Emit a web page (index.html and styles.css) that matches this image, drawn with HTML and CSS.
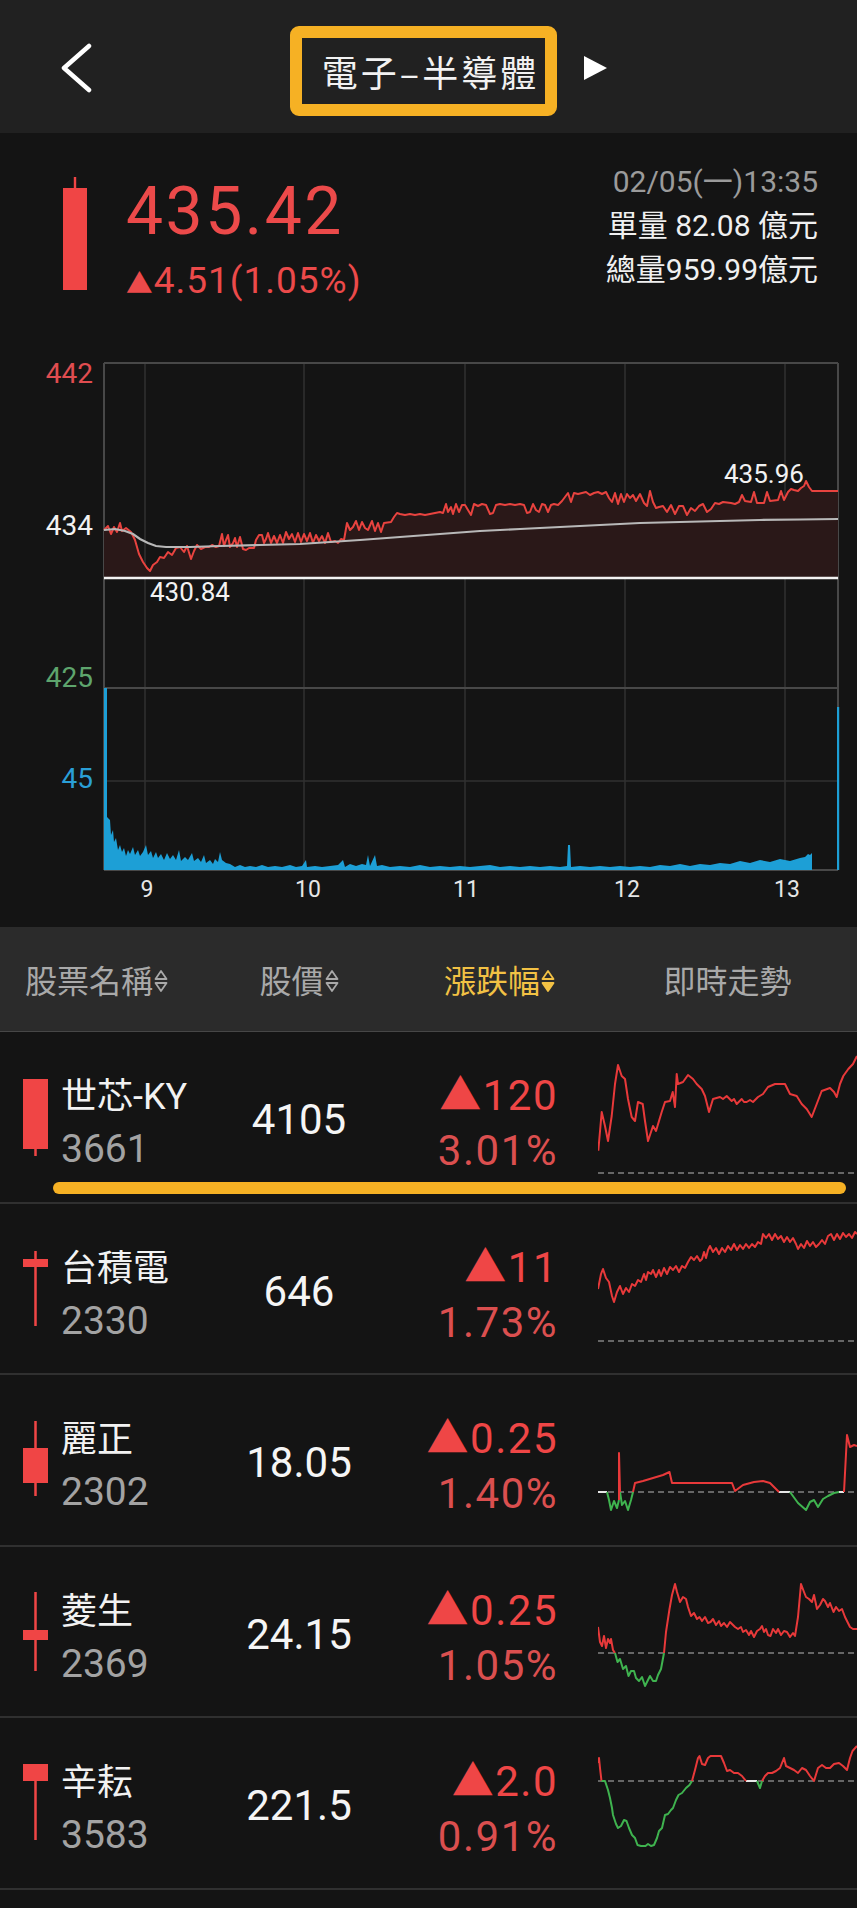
FILE: index.html
```html
<!DOCTYPE html>
<html lang="zh-Hant">
<head>
    <meta charset="UTF-8">
    <meta name="viewport" content="width=device-width, initial-scale=1.0">
    <title>電子–半導體</title>
    <link rel="stylesheet" href="styles.css">
</head>
<body>
<div class="app">
    <header class="topbar">
        <button class="back" aria-label="返回">
            <svg width="32" height="50" viewBox="0 0 32 50"><polyline points="29,3 4,25 29,47" fill="none" stroke="#fff" stroke-width="4.5" stroke-linecap="round" stroke-linejoin="round"/></svg>
        </button>
        <h1 class="title">電子–半導體</h1>
        <svg class="next" width="26" height="26" viewBox="0 0 26 26"><polygon points="2,1 25,13 2,25" fill="#fff"/></svg>
    </header>

    <section class="summary">
        <div class="quote">
            <svg class="candle-big" width="24" height="113" viewBox="0 0 24 113"><rect x="10.8" y="0" width="2.4" height="12" fill="#f04545"/><rect x="0" y="11" width="24" height="102" fill="#f04545"/></svg>
            <div class="quote-text">
                <div class="quote-price">435.42</div>
                <div class="quote-change"><span class="tri">▲</span>4.51(1.05%)</div>
            </div>
        </div>
        <div class="quote-meta">
            <div class="meta-time">02/05(一)13:35</div>
            <div>單量 82.08 億元</div>
            <div>總量959.99億元</div>
        </div>
    </section>

    <svg class="intraday" width="857" height="587" viewBox="0 0 857 587">
        <g stroke="#303030" stroke-width="1.5">
            <line x1="145" y1="23" x2="145" y2="530"/>
            <line x1="304" y1="23" x2="304" y2="530"/>
            <line x1="465" y1="23" x2="465" y2="530"/>
            <line x1="625" y1="23" x2="625" y2="530"/>
            <line x1="785" y1="23" x2="785" y2="530"/>
            <line x1="104" y1="441" x2="838" y2="441"/>
        </g>
        <g stroke="#484848" stroke-width="2">
            <line x1="104" y1="23" x2="838" y2="23"/>
            <line x1="104" y1="348" x2="838" y2="348"/>
            <line x1="104" y1="23" x2="104" y2="530"/>
            <line x1="838" y1="23" x2="838" y2="530"/>
            <line x1="104" y1="530" x2="838" y2="530"/>
        </g>
        <polygon fill="#2a1818" points="104,190 108,186 111,194 114,187 117,192 120,183 122,191 126,188 131,192 135,200 139,214 143,222 147,228 150,231 153,225 157,222 160,217 164,218 168,212 172,215 176,208 180,207 184,212 187,206 191,219 194,211 197,205 201,209 205,207 209,207 212,205 216,207 219,206 222,194 224,206 226,200 228,195 230,207 233,203 235,198 237,207 240,197 243,209 246,210 249,208 254,208 256,200 259,195 262,195 264,203 266,199 268,193 271,203 274,196 277,203 280,195 283,203 286,192 289,199 292,194 295,202 298,193 301,202 304,194 307,201 310,193 313,203 316,195 319,201 322,196 325,203 328,193 331,202 335,201 338,203 341,199 344,200 347,183 350,190 353,187 356,181 359,190 362,182 365,188 368,190 372,181 375,191 378,183 381,192 384,183 391,182 394,177 397,173 400,174 405,175 410,174 415,175 420,174 425,175 430,174 435,173 440,172 443,173 446,164 448,172 451,167 453,174 456,164 459,172 462,165 465,165 468,170 471,175 474,164 478,166 482,164 486,165 490,174 493,173 496,165 500,164 505,165 510,164 515,165 520,164 524,165 527,173 530,172 533,164 536,170 539,172 542,164 545,165 548,172 551,165 554,164 558,165 562,161 565,157 568,153 571,162 574,153 578,154 582,153 586,152 590,155 594,153 598,152 602,154 606,152 609,158 612,162 615,153 618,164 621,154 624,162 627,154 630,158 633,155 636,161 640,154 644,163 647,166 650,151 653,162 656,168 659,167 663,166 667,172 671,165 675,174 679,166 683,166 687,175 691,168 695,171 699,166 703,164 707,172 711,169 715,163 719,164 723,162 731,163 735,164 739,162 742,155 745,161 751,162 754,152 757,163 764,163 767,152 770,161 778,160 781,151 784,160 788,152 791,149 794,150 798,151 801,148 804,146 806,141 809,147 812,151 838,151 838,238 104,238"/>
        <polyline fill="none" stroke="#e8433f" stroke-width="2" stroke-linejoin="round" points="104,190 108,186 111,194 114,187 117,192 120,183 122,191 126,188 131,192 135,200 139,214 143,222 147,228 150,231 153,225 157,222 160,217 164,218 168,212 172,215 176,208 180,207 184,212 187,206 191,219 194,211 197,205 201,209 205,207 209,207 212,205 216,207 219,206 222,194 224,206 226,200 228,195 230,207 233,203 235,198 237,207 240,197 243,209 246,210 249,208 254,208 256,200 259,195 262,195 264,203 266,199 268,193 271,203 274,196 277,203 280,195 283,203 286,192 289,199 292,194 295,202 298,193 301,202 304,194 307,201 310,193 313,203 316,195 319,201 322,196 325,203 328,193 331,202 335,201 338,203 341,199 344,200 347,183 350,190 353,187 356,181 359,190 362,182 365,188 368,190 372,181 375,191 378,183 381,192 384,183 391,182 394,177 397,173 400,174 405,175 410,174 415,175 420,174 425,175 430,174 435,173 440,172 443,173 446,164 448,172 451,167 453,174 456,164 459,172 462,165 465,165 468,170 471,175 474,164 478,166 482,164 486,165 490,174 493,173 496,165 500,164 505,165 510,164 515,165 520,164 524,165 527,173 530,172 533,164 536,170 539,172 542,164 545,165 548,172 551,165 554,164 558,165 562,161 565,157 568,153 571,162 574,153 578,154 582,153 586,152 590,155 594,153 598,152 602,154 606,152 609,158 612,162 615,153 618,164 621,154 624,162 627,154 630,158 633,155 636,161 640,154 644,163 647,166 650,151 653,162 656,168 659,167 663,166 667,172 671,165 675,174 679,166 683,166 687,175 691,168 695,171 699,166 703,164 707,172 711,169 715,163 719,164 723,162 731,163 735,164 739,162 742,155 745,161 751,162 754,152 757,163 764,163 767,152 770,161 778,160 781,151 784,160 788,152 791,149 794,150 798,151 801,148 804,146 806,141 809,147 812,151 838,151"/>
        <polyline fill="none" stroke="#b8b8b8" stroke-width="2.2" points="104,190 115,189 125,191 133,194 140,199 148,203 156,206 166,207 190,207 220,206 260,205 300,204 330,202 360,200 400,197 440,194 480,191 520,189 560,187 600,185 640,183 680,182 720,181 760,180 800,179.5 838,179"/>
        <line x1="104" y1="238" x2="838" y2="238" stroke="#f2f2f2" stroke-width="2.5"/>
        <polygon fill="#1d9fd6" points="104,530 104,348 107,348 107,477 110,480 111,495 113,490 114,502 116,498 118,510 120,505 122,512 124,508 126,516 128,510 130,514 133,507 135,515 138,510 140,516 143,512 146,505 148,515 151,511 153,518 156,512 158,518 161,514 164,520 167,513 170,519 173,515 176,520 179,510 181,521 185,517 188,520 192,513 194,521 198,518 201,522 204,515 206,523 210,520 213,524 215,519 218,522 220,512 222,520 226,523 230,524 235,527 240,525 245,527 250,526 256,527 262,525 268,527 275,526 282,527 290,525 296,527 302,526 306,520 307,527 315,526 322,527 330,526 338,525 343,520 345,527 350,524 356,526 362,524 366,525 368,515 370,526 375,515 377,526 382,525 390,527 400,526 410,527 420,525 430,527 440,526 450,527 460,526 470,527 480,526 490,525 500,527 510,526 520,527 530,526 540,527 550,526 560,527 567,526 568,505 570,505 571,527 580,526 590,527 600,526 610,527 620,526 630,527 640,526 650,527 660,525 670,526 680,524 690,526 700,524 710,525 720,523 730,524 740,521 750,523 760,520 770,522 780,519 790,521 800,518 805,517 808,514 810,515 812,513 812,530"/>
        <rect x="837" y="367" width="2.2" height="163" fill="#1d9fd6"/>
        <g class="axis-label" text-anchor="end">
            <text x="93" y="43" fill="#e04d50">442</text>
            <text x="93" y="195" fill="#f2f2f2">434</text>
            <text x="93" y="347" fill="#5ea56d">425</text>
            <text x="93" y="448" fill="#2a9fd6">45</text>
        </g>
        <g class="time-label" text-anchor="middle" fill="#e6e6e6">
            <text x="147" y="557">9</text>
            <text x="308" y="557">10</text>
            <text x="466" y="557">11</text>
            <text x="627" y="557">12</text>
            <text x="787" y="557">13</text>
        </g>
        <g class="mark-label" fill="#f2f2f2">
            <text x="150" y="261">430.84</text>
            <text x="724" y="143">435.96</text>
        </g>
    </svg>

    <div class="list-head">
        <div class="sortable head-name">股票名稱<svg class="sort" width="14" height="24" viewBox="0 0 14 24"><path d="M7 2 L12.5 10 H1.5 Z" fill="none" stroke="currentColor" stroke-width="1.8" stroke-linejoin="round"/><path d="M1.5 14 H12.5 L7 22 Z" fill="none" stroke="currentColor" stroke-width="1.8" stroke-linejoin="round"/></svg></div>
        <div class="sortable head-price">股價<svg class="sort" width="14" height="24" viewBox="0 0 14 24"><path d="M7 2 L12.5 10 H1.5 Z" fill="none" stroke="currentColor" stroke-width="1.8" stroke-linejoin="round"/><path d="M1.5 14 H12.5 L7 22 Z" fill="none" stroke="currentColor" stroke-width="1.8" stroke-linejoin="round"/></svg></div>
        <div class="sortable head-change">漲跌幅<svg class="sort" width="14" height="24" viewBox="0 0 14 24"><path d="M7 2 L12.5 10 H1.5 Z" fill="none" stroke="currentColor" stroke-width="1.8" stroke-linejoin="round"/><path d="M1.5 14 H12.5 L7 22 Z" fill="currentColor" stroke="currentColor" stroke-width="1.8" stroke-linejoin="round"/></svg></div>
        <div class="head-trend">即時走勢</div>
    </div>

    <div class="stock-row">
        <div class="stock-name">
            <svg class="candle" width="25" height="80" viewBox="0 0 25 80"><rect x="0" y="2" width="25" height="70"/><rect x="11.25" y="72" width="2.5" height="7"/></svg>
            <div class="label">
                <div class="name">世芯-KY</div>
                <div class="code">3661</div>
            </div>
        </div>
        <div class="stock-price">4105</div>
        <div class="stock-change"><div class="chg"><span class="tri">▲</span>120</div><div class="pct">3.01%</div></div>
        <svg class="spark" width="259" height="170" viewBox="0 0 259 170">
            <line class="base" x1="0" y1="141" x2="259" y2="141"/>
            <polyline class="up" points="0.3,118.7 3.7,80 7,94 10,109 13.7,84 17,52 20,33 23.7,44 27,47 30,67 33.7,85 37,89 40,70 44.7,72 47,89 50,109 55,94 58,99 63.7,80 67,70 72,69 74.7,60 77,75 78.7,42 80,52 85,50 90,43 95,47 98.7,52 103.7,57 107,64 111,80 115,67 122,65 125,67 128.7,64 133.7,69 136,67 138.7,72 143.7,67 146,70 148.7,70 152,68 155,70 160,65 165,62 170,55 177,52 187,52 192,62 198.7,64 203.7,72 208.7,77 213.7,85 218.7,72 223.7,59 232,56 236,60 238.7,65 242,52 245.3,44 250.3,37 255,32 259,24"/>
        </svg>
        <div class="highlight"></div>
    </div>

    <div class="stock-row">
        <div class="stock-name">
            <svg class="candle" width="25" height="80" viewBox="0 0 25 80"><rect x="11.25" y="2" width="2.5" height="75"/><rect x="0" y="10" width="25" height="8"/></svg>
            <div class="label">
                <div class="name">台積電</div>
                <div class="code">2330</div>
            </div>
        </div>
        <div class="stock-price">646</div>
        <div class="stock-change"><div class="chg"><span class="tri">▲</span>11</div><div class="pct">1.73%</div></div>
        <svg class="spark" width="259" height="170" viewBox="0 0 259 170">
            <line class="base" x1="0" y1="137" x2="259" y2="137"/>
            <polyline class="up" points="0,85 3,70 5,65 8,74 11,78 14,92 16,98 19,88 22,82 25,90 28,84 31,88 34,80 37,82 40,76 43,78 46,70 48,76 50,68 53,70 55,66 58,73 61,66 63,72 66,64 69,70 72,63 75,66 78,62 81,68 84,62 87,64 90,58 93,53 96,56 99,52 102,57 104,55 106,48 108,54 110,46 112,42 115,48 118,44 121,50 124,44 127,48 130,42 133,46 136,40 139,46 142,41 145,45 148,40 151,44 154,40 157,43 160,38 163,40 165,30 168,34 171,30 174,36 177,30 180,35 183,32 186,38 189,33 192,38 195,34 198,40 200,45 203,40 206,44 209,37 212,42 215,38 218,43 221,40 224,36 227,40 230,32 233,30 236,36 239,30 242,35 245,29 248,33 251,30 254,34 257,28 259,30"/>
        </svg>
    </div>

    <div class="stock-row">
        <div class="stock-name">
            <svg class="candle" width="25" height="80" viewBox="0 0 25 80"><rect x="11.25" y="1" width="2.5" height="75"/><rect x="0" y="28" width="25" height="35"/></svg>
            <div class="label">
                <div class="name">麗正</div>
                <div class="code">2302</div>
            </div>
        </div>
        <div class="stock-price">18.05</div>
        <div class="stock-change"><div class="chg"><span class="tri">▲</span>0.25</div><div class="pct">1.40%</div></div>
        <svg class="spark" width="259" height="170" viewBox="0 0 259 170">
            <line class="base" x1="0" y1="117" x2="259" y2="117"/>
            <polyline class="flat" points="0,117 9,117"/>
            <polyline class="flat" points="181,117 192,117"/>
            <polyline class="flat" points="241,117 246,117"/>
            <polyline class="down" points="9,117 11,125 13,135 16,126 19,133 21,125"/>
            <polyline class="down" points="22,117 24,130 27,126 30,135 33,125 35,117"/>
            <polyline class="down" points="192,117 200,128 208,135 212,127 216,125 220,132 225,124 230,121 236,118 241,117"/>
            <polyline class="up" points="21,125 21,78 22,117"/>
            <polyline class="up" points="35,117 37,108 45,106 55,103 65,100 71.5,97 74,108 100,108 134,108 137,116 145,110 156,107 165,106 172,108 181,117"/>
            <polyline class="up" points="246,117 249,60 252,72 256,70 259,71"/>
        </svg>
    </div>

    <div class="stock-row">
        <div class="stock-name">
            <svg class="candle" width="25" height="80" viewBox="0 0 25 80"><rect x="11.25" y="0" width="2.5" height="79"/><rect x="0" y="38" width="25" height="10"/></svg>
            <div class="label">
                <div class="name">菱生</div>
                <div class="code">2369</div>
            </div>
        </div>
        <div class="stock-price">24.15</div>
        <div class="stock-change"><div class="chg"><span class="tri">▲</span>0.25</div><div class="pct">1.05%</div></div>
        <svg class="spark" width="259" height="170" viewBox="0 0 259 170">
            <line class="base" x1="0" y1="106" x2="259" y2="106"/>
            <polyline class="up" points="0,80 2,95 4,99 6,89 8,101 10,92 12,96 13,92 15,103 17,106"/>
            <polyline class="down" points="17,106 19.5,115 22,112 25,122 28,119 30.5,129 33,124 36,124 38,131 41,134 44,130 47,139 50,133 52,129 55,134 58,134 60,128 63,122 66,106"/>
            <polyline class="up" points="66,106 68,85 71.5,62 74,48 77,37 79,45 82,55 85,50 88,52 90,60 93,69 96,66 99,72 101.5,70 104,74 107,70 110,76 112.5,75 115,72 118,78 121,74 123,79 126,76 129,80 132,75 134,77 137,80 140,82 143,80 145,85 148,83 151,88 153,84 156,90 159,84 162,82 164,79 166,85 168,82 170,88 172.5,89 175,82 178,86 180,82 183,88 186,84 189,85 192,90 195,86 197,89 200,70 203,37 206,45 208,50 211,52 214,55 216,48 219,62 222,58 225,52 227,54 230,60 232,56 235.5,65 238,60 241,64 244,62 247,70 250,76 252,80 255,82 259,82"/>
        </svg>
    </div>

    <div class="stock-row">
        <div class="stock-name">
            <svg class="candle" width="25" height="80" viewBox="0 0 25 80"><rect x="0" y="1" width="25" height="17"/><rect x="11.25" y="18" width="2.5" height="59"/></svg>
            <div class="label">
                <div class="name">辛耘</div>
                <div class="code">3583</div>
            </div>
        </div>
        <div class="stock-price">221.5</div>
        <div class="stock-change"><div class="chg"><span class="tri">▲</span>2.0</div><div class="pct">0.91%</div></div>
        <svg class="spark" width="259" height="170" viewBox="0 0 259 170">
            <line class="base" x1="0" y1="63" x2="259" y2="63"/>
            <polyline class="flat" points="148,63 159,63"/>
            <polyline class="up" points="0,45 1,40 2,50 3.5,63"/>
            <polyline class="down" points="3.5,63 7,63 10,72 12,80 14,90 15,97 18,106 20,110 23,108 26,102 28.5,103 31,110 34,117 37,120 39.5,127 43,128 47.5,128 50,126 53,128 56,127 59,120 61,113 64,110 67,97 70,96 73,92 75,90 78,82 80.5,77 84,75 88,70 91.5,67 94,63"/>
            <polyline class="up" points="94,63 97,52 100,40 101.5,38 104,46 107,47 110,40 112.5,38 116,38 120,38 123,38 126,45 129,53 132,52 136,55 140,55 144,58 148,63"/>
            <polyline class="down" points="159,63 162,70 164,63"/>
            <polyline class="up" points="164,63 167,58 170,55 174,55 178,53 182,50 186,40 188,48 192,50 196,52 200,55 204,50 208,52 212,58 216,63 220,50 224,47 228,50 232,50 236,46 241,45 245,48 249,52 252,40 254.5,33 259,28"/>
        </svg>
    </div>
</div>
</body>
</html>
```

FILE: styles.css
```css
* {
    box-sizing: border-box;
}
body {
    margin: 0;
    background-color: #141414;
    color: #f0f0f0;
    font-family: Roboto, "Noto Sans CJK TC", sans-serif;
}
.app {
    width: 857px;
}

/* top bar */
.topbar {
    display: grid;
    grid-template-columns: 1fr auto 1fr;
    align-items: center;
    height: 133px;
    padding-top: 8px;
    background-color: #212121;
}
.back {
    justify-self: start;
    display: flex;
    margin: 0 0 5px 0;
    padding: 0 0 0 60px;
    background: none;
    border: 0;
}
.title {
    height: 90px;
    margin: 0 10px 0 0;
    padding: 0 6px 0 20px;
    border: 12px solid #f6b124;
    border-radius: 9px;
    font-family: "Noto Sans CJK TC", sans-serif;
    font-size: 36px;
    font-weight: normal;
    line-height: 66px;
    letter-spacing: 3px;
    color: #f2f2f2;
}
.next {
    margin: 0 0 6px 15px;
}

/* index quote */
.summary {
    display: flex;
    justify-content: space-between;
    height: 207px;
    padding: 0 39px 0 63px;
}
.quote {
    display: flex;
    align-items: flex-start;
}
.candle-big {
    margin-top: 44px;
}
.quote-text {
    margin: 41px 0 0 39px;
    color: #ec4a4a;
}
.quote-price {
    font-size: 66px;
    line-height: 76px;
    letter-spacing: 2.5px;
}
.quote-change {
    margin-top: 9px;
    font-size: 37px;
    line-height: 44px;
    letter-spacing: 1px;
}
.quote-change .tri {
    font-size: 0.72em;
}
.quote-meta {
    margin-top: 27px;
    text-align: right;
    font-size: 30px;
    line-height: 44px;
    color: #f0f0f0;
}
.meta-time {
    color: #9b9b9b;
}

/* intraday chart */
.intraday {
    display: block;
}
.intraday text {
    font-family: Roboto, sans-serif;
}
.axis-label {
    font-size: 28px;
}
.time-label {
    font-size: 23px;
}
.mark-label {
    font-size: 26px;
}

/* list */
.list-head,
.stock-row {
    display: grid;
    grid-template-columns: 219px 160px 179px 1fr;
    align-items: center;
}
.list-head {
    height: 105px;
    background-color: #2b2b2b;
    border-bottom: 1px solid #474747;
    font-size: 32px;
    color: #a9a9a9;
}
.sortable {
    display: inline-flex;
    align-items: center;
    gap: 1px;
}
.sort {
    margin-top: 4px;
}
.head-name {
    padding-left: 25px;
}
.head-price {
    justify-self: center;
}
.head-change {
    justify-self: end;
    margin-right: 3px;
    color: #f2c144;
}
.head-trend {
    padding-left: 40px;
    text-align: center;
}

.stock-row {
    position: relative;
    height: 171.5px;
    border-bottom: 2px solid #303030;
}
.stock-name {
    display: flex;
    align-items: center;
    padding-left: 23px;
}
.candle {
    fill: #f04545;
}
.label {
    margin-left: 13px;
    padding-top: 6px;
}
.name {
    font-size: 36px;
    line-height: 56px;
    color: #f2f2f2;
}
.code {
    margin-top: 2px;
    font-size: 39px;
    line-height: 44px;
    color: #a3a3a3;
}
.stock-price {
    justify-self: center;
    padding-top: 5px;
    font-size: 42px;
    color: #f5f5f5;
}
.stock-change {
    justify-self: end;
    padding-top: 8px;
    text-align: right;
    font-size: 42px;
    line-height: 59px;
    letter-spacing: 1.5px;
}
.chg {
    padding-top: 8px;
    line-height: 51px;
    color: #ef4646;
}
.pct {
    color: #db4f4f;
}
.spark {
    display: block;
    margin-left: 40px;
    overflow: hidden;
}
.spark polyline {
    fill: none;
    stroke-width: 2;
    stroke-linejoin: round;
}
.spark .up {
    stroke: #e8393a;
}
.spark .down {
    stroke: #3fb34f;
}
.spark .flat {
    stroke: #e6e6e6;
}
.spark .base {
    stroke: #666;
    stroke-width: 2;
    stroke-dasharray: 6 4;
}
.highlight {
    position: absolute;
    left: 53px;
    top: 150px;
    width: 793px;
    height: 12px;
    border-radius: 6px;
    background-color: #f6b124;
}
```
